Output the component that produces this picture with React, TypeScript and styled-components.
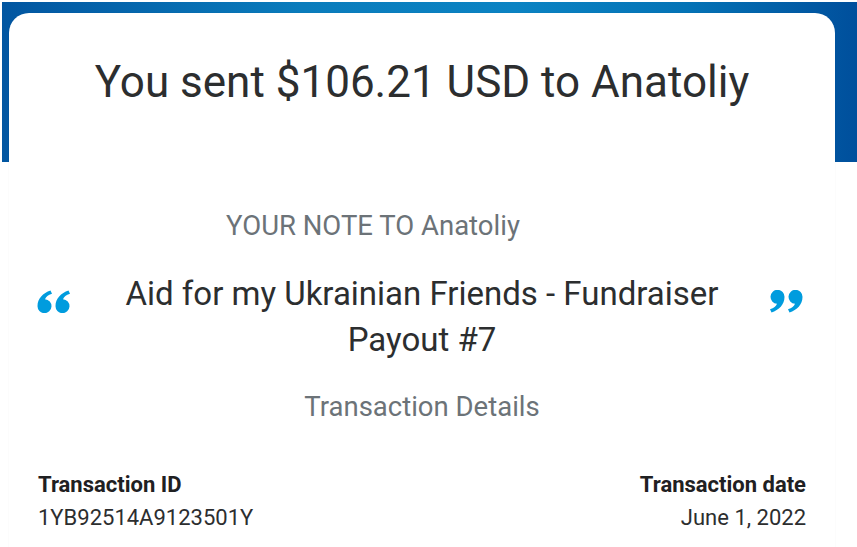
import React from 'react';
import styled, { createGlobalStyle } from 'styled-components';

const GlobalStyle = createGlobalStyle`
  html, body {
    margin: 0;
    padding: 0;
    background: #fff;
  }
  body {
    font-family: Roboto, "Liberation Sans", Arial, sans-serif;
  }
`;

const Page = styled.div`
  width: 857px;
  height: 547px;
  overflow: hidden;
  box-sizing: border-box;
  padding: 13px 22px 0 9px;
  background-color: #fff;
  background-image: linear-gradient(90deg, #0256a1 0%, #0a7cbc 35%, #0b83c3 60%, #0473b6 80%, #004f9c 100%);
  background-size: calc(100% - 2px) 160px;
  background-position: 2px 2px;
  background-repeat: no-repeat;
`;

const Card = styled.div`
  background: #fff;
  border-radius: 20px 20px 0 0;
  box-shadow: 0 0 2px rgba(0, 0, 0, 0.06);
  padding: 43px 29px 0;
  min-height: 540px;
  box-sizing: border-box;
`;

const Title = styled.h1`
  margin: 0;
  font-size: 44px;
  line-height: 52px;
  font-weight: 400;
  color: #2c2e2f;
  text-align: center;
`;

const NoteLabel = styled.div`
  margin: 102px 0 0;
  padding-right: 98px;
  font-size: 27.5px;
  line-height: 32px;
  color: #6c7378;
  text-align: center;
`;

const NoteRow = styled.div`
  display: flex;
  align-items: flex-start;
  margin-top: 29px;
`;

const Quote = styled.svg<{ $ml: number; $mr: number }>`
  flex: none;
  width: 34px;
  height: 23px;
  margin: 19px ${({ $mr }) => $mr}px 0 ${({ $ml }) => $ml}px;
  fill: #009cde;
`;

const NoteText = styled.p`
  flex: 1;
  margin: 0;
  padding: 0 36px 0 40px;
  font-size: 33px;
  line-height: 46px;
  color: #2c2e2f;
  text-align: center;
`;

const SectionTitle = styled.h2`
  margin: 28px 0 0;
  font-size: 27.5px;
  line-height: 32px;
  font-weight: 400;
  color: #6c7378;
  text-align: center;
`;

const DetailsRow = styled.div`
  display: flex;
  justify-content: space-between;
  margin-top: 45px;
`;

const DetailCol = styled.div<{ $align: 'left' | 'right' }>`
  text-align: ${({ $align }) => $align};
`;

const DetailLabel = styled.div`
  font-size: 22px;
  line-height: 33px;
  font-weight: 700;
  color: #1f2022;
`;

const DetailValue = styled.div`
  font-size: 22px;
  line-height: 33px;
  color: #2c2e2f;
`;

// one "6"-shaped quote mark: round dot with a tail sweeping up and right
const mark = 'M13.5 0.5 C6 3 0.5 8.5 0.5 16 A7 7 0 1 0 8 9.2 C9 6.8 11 5 15 3.8 Z';

const OpenQuote = () => (
  <Quote viewBox="0 0 34 23" $ml={-1} $mr={0}>
    <path d={mark} />
    <path d={mark} transform="translate(18 0)" />
  </Quote>
);

const CloseQuote = () => (
  <Quote viewBox="0 0 34 23" $ml={0} $mr={3}>
    <g transform="rotate(180 17 11.5)">
      <path d={mark} />
      <path d={mark} transform="translate(18 0)" />
    </g>
  </Quote>
);

const App: React.FC = () => {
  return (
    <Page>
      <GlobalStyle />
      <Card>
        <Title>You sent $106.21 USD to Anatoliy</Title>
        <NoteLabel>YOUR NOTE TO Anatoliy</NoteLabel>
        <NoteRow>
          <OpenQuote />
          <NoteText>Aid for my Ukrainian Friends - Fundraiser Payout #7</NoteText>
          <CloseQuote />
        </NoteRow>
        <SectionTitle>Transaction Details</SectionTitle>
        <DetailsRow>
          <DetailCol $align="left">
            <DetailLabel>Transaction ID</DetailLabel>
            <DetailValue>1YB92514A9123501Y</DetailValue>
          </DetailCol>
          <DetailCol $align="right">
            <DetailLabel>Transaction date</DetailLabel>
            <DetailValue>June 1, 2022</DetailValue>
          </DetailCol>
        </DetailsRow>
      </Card>
    </Page>
  );
};

export default App;
